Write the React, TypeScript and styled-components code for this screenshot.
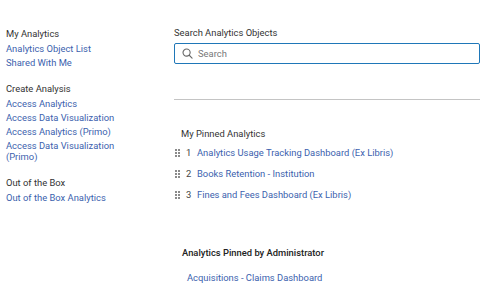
import styled, { createGlobalStyle } from 'styled-components';

const GlobalStyle = createGlobalStyle`
  body {
    margin: 0;
    background: #fff;
    font-family: Roboto, "Liberation Sans", sans-serif;
    font-size: 9.4px;
    color: #333;
  }
`;

const Page = styled.div`
  display: grid;
  grid-template-columns: 168px 306px;
  padding: 27px 0 0 6px;
`;

const Sidebar = styled.nav`
  display: flex;
  flex-direction: column;
  gap: 13px;
  width: 132px;
`;

const Group = styled.div`
  display: flex;
  flex-direction: column;
`;

const GroupTitle = styled.div`
  line-height: 14px;
  color: #333;
`;

const NavLink = styled.a`
  color: #3b5fae;
  line-height: 14px;
  text-decoration: none;
  cursor: pointer;
`;

const SideLink = styled(NavLink)`
  line-height: 11px;
  padding: 1.5px 0;
`;

const Main = styled.main`
  display: flex;
  flex-direction: column;
`;

const Label = styled.div`
  line-height: 12px;
  color: #333;
  margin-bottom: 4px;
`;

const SearchBox = styled.label`
  display: flex;
  align-items: center;
  gap: 5px;
  height: 21px;
  box-sizing: border-box;
  border: 1px solid #1f77b8;
  border-radius: 2px;
  padding: 0 7px;
`;

const SearchInput = styled.input`
  flex: 1;
  border: none;
  outline: none;
  font: inherit;
  color: #333;
  padding: 0;
  &::placeholder {
    color: #777;
  }
`;

const Divider = styled.hr`
  border: none;
  border-top: 1px solid #c4c4c4;
  margin: 35px 0 0;
`;

const Section = styled.section<{ $top: number }>`
  display: flex;
  flex-direction: column;
  margin-top: ${(p) => p.$top}px;
`;

const SectionTitle = styled.div<{ $bold?: boolean }>`
  line-height: 14px;
  padding-left: ${(p) => (p.$bold ? 8 : 7)}px;
  font-weight: ${(p) => (p.$bold ? 500 : 400)};
  color: ${(p) => (p.$bold ? '#222' : '#333')};
`;

const PinnedList = styled.ol`
  list-style: none;
  margin: 5px 0 0;
  padding: 0;
  display: flex;
  flex-direction: column;
  gap: 7px;
`;

const PinnedRow = styled.li`
  display: flex;
  align-items: center;
  line-height: 14px;
`;

const Grip = styled.span`
  display: grid;
  grid-template-columns: repeat(2, 2px);
  gap: 1px;
  margin: 0 6px 0 1px;
`;

const Dot = styled.i`
  width: 2px;
  height: 2px;
  background: #8a8a8a;
`;

const Index = styled.span`
  width: 11px;
  color: #444;
`;

const AdminLink = styled(NavLink)`
  margin: 11px 0 0 13px;
`;

function SearchIcon() {
  return (
    <svg width="11" height="11" viewBox="0 0 12 12" fill="none" stroke="#666" strokeWidth="1.2">
      <circle cx="5" cy="5" r="3.9" />
      <path d="M7.9 7.9 11 11" strokeLinecap="round" />
    </svg>
  );
}

const pinned = [
  'Analytics Usage Tracking Dashboard (Ex Libris)',
  'Books Retention - Institution',
  'Fines and Fees Dashboard (Ex Libris)',
];

const nav = [
  { title: 'My Analytics', links: ['Analytics Object List', 'Shared With Me'] },
  {
    title: 'Create Analysis',
    links: [
      'Access Analytics',
      'Access Data Visualization',
      'Access Analytics (Primo)',
      'Access Data Visualization (Primo)',
    ],
  },
  { title: 'Out of the Box', links: ['Out of the Box Analytics'] },
];

function App() {
  return (
    <>
      <GlobalStyle />
      <Page>
        <Sidebar>
          {nav.map((g) => (
            <Group key={g.title}>
              <GroupTitle>{g.title}</GroupTitle>
              {g.links.map((l) => (
                <SideLink key={l}>{l}</SideLink>
              ))}
            </Group>
          ))}
        </Sidebar>
        <Main>
          <Label>Search Analytics Objects</Label>
          <SearchBox>
            <SearchIcon />
            <SearchInput placeholder="Search" />
          </SearchBox>
          <Divider />
          <Section $top={27}>
            <SectionTitle>My Pinned Analytics</SectionTitle>
            <PinnedList>
              {pinned.map((p, i) => (
                <PinnedRow key={p}>
                  <Grip>
                    {[...new Array(6)].map((_, k) => <Dot key={k} />)}
                  </Grip>
                  <Index>{i + 1}</Index>
                  <NavLink>{p}</NavLink>
                </PinnedRow>
              ))}
            </PinnedList>
          </Section>
          <Section $top={44}>
            <SectionTitle $bold>Analytics Pinned by Administrator</SectionTitle>
            <AdminLink>Acquisitions - Claims Dashboard</AdminLink>
          </Section>
        </Main>
      </Page>
    </>
  );
}

export default App;
